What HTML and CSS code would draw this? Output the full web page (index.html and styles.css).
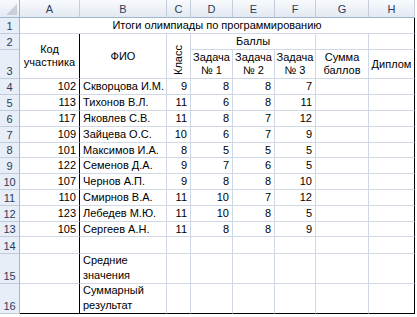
FILE: index.html
```html
<!DOCTYPE html>
<html lang="ru">
<head>
<meta charset="utf-8">
<link rel="stylesheet" href="styles.css">
</head>
<body>
<div class="sheet">
  <div class="corner"><svg width="19" height="17" viewBox="0 0 19 17"><polygon points="17,4 17,15 6,15" fill="#c9d0da"/></svg></div>
  <div class="ch">A</div><div class="ch">B</div><div class="ch">C</div><div class="ch">D</div><div class="ch">E</div><div class="ch">F</div><div class="ch">G</div><div class="ch">H</div>

  <div class="rh">1</div>
  <div class="c title">Итоги олимпиады по программированию</div>

  <div class="rh">2</div>
  <div class="c r23 ctr colA bb">Код<br>участника</div>
  <div class="c r23 ctr">ФИО</div>
  <div class="c r23 rot"><span>Класс</span></div>
  <div class="c span3 ctr">Баллы</div>
  <div class="c"></div>
  <div class="c last"></div>

  <div class="rh">3</div>
  <div class="c ctr">Задача<br>№ 1</div>
  <div class="c ctr">Задача<br>№ 2</div>
  <div class="c ctr">Задача<br>№ 3</div>
  <div class="c ctr">Сумма<br>баллов</div>
  <div class="c ctr last">Диплом</div>

  <div class="rh">4</div><div class="c num colA">102</div><div class="c txt">Скворцова И.М.</div><div class="c num">9</div><div class="c num">8</div><div class="c num">8</div><div class="c num">7</div><div class="c"></div><div class="c last"></div>
  <div class="rh">5</div><div class="c num colA">113</div><div class="c txt">Тихонов В.Л.</div><div class="c num">11</div><div class="c num">6</div><div class="c num">8</div><div class="c num">11</div><div class="c"></div><div class="c last"></div>
  <div class="rh">6</div><div class="c num colA">117</div><div class="c txt">Яковлев С.В.</div><div class="c num">11</div><div class="c num">8</div><div class="c num">7</div><div class="c num">12</div><div class="c"></div><div class="c last"></div>
  <div class="rh">7</div><div class="c num colA">109</div><div class="c txt">Зайцева О.С.</div><div class="c num">10</div><div class="c num">6</div><div class="c num">7</div><div class="c num">9</div><div class="c"></div><div class="c last"></div>
  <div class="rh">8</div><div class="c num colA">101</div><div class="c txt">Максимов И.А.</div><div class="c num">8</div><div class="c num">5</div><div class="c num">5</div><div class="c num">5</div><div class="c"></div><div class="c last"></div>
  <div class="rh">9</div><div class="c num colA">122</div><div class="c txt">Семенов Д.А.</div><div class="c num">9</div><div class="c num">7</div><div class="c num">6</div><div class="c num">5</div><div class="c"></div><div class="c last"></div>
  <div class="rh">10</div><div class="c num colA">107</div><div class="c txt">Чернов А.П.</div><div class="c num">9</div><div class="c num">8</div><div class="c num">8</div><div class="c num">10</div><div class="c"></div><div class="c last"></div>
  <div class="rh">11</div><div class="c num colA">110</div><div class="c txt">Смирнов В.А.</div><div class="c num">11</div><div class="c num">10</div><div class="c num">7</div><div class="c num">12</div><div class="c"></div><div class="c last"></div>
  <div class="rh">12</div><div class="c num colA">123</div><div class="c txt">Лебедев М.Ю.</div><div class="c num">11</div><div class="c num">10</div><div class="c num">8</div><div class="c num">5</div><div class="c"></div><div class="c last"></div>
  <div class="rh">13</div><div class="c num colA">105</div><div class="c txt">Сергеев А.Н.</div><div class="c num">11</div><div class="c num">8</div><div class="c num">8</div><div class="c num">9</div><div class="c"></div><div class="c last"></div>
  <div class="rh">14</div><div class="c colA"></div><div class="c"></div><div class="c"></div><div class="c"></div><div class="c"></div><div class="c"></div><div class="c"></div><div class="c last"></div>
  <div class="rh">15</div><div class="c colA"></div><div class="c wrap">Средние<br>значения</div><div class="c"></div><div class="c"></div><div class="c"></div><div class="c"></div><div class="c"></div><div class="c last"></div>
  <div class="rh">16</div><div class="c colA bb"></div><div class="c wrap bb">Суммарный<br>результат</div><div class="c bb"></div><div class="c bb"></div><div class="c bb"></div><div class="c bb"></div><div class="c bb"></div><div class="c last bb"></div>
</div>
</body>
</html>
```
FILE: styles.css
```css
html, body {
  margin: 0;
  padding: 0;
  background: #fff;
}
body {
  font-family: "Liberation Sans", Arial, sans-serif;
  font-size: 11px;
  color: #000;
}
.sheet {
  display: grid;
  grid-template-columns: 20px 60px 87px 24px 42px 42px 41px 53px 46px;
  grid-template-rows: 18px 16px 16px 29px 16px 16px 16px 16px 15px 16px 16px 16px 16px 15px 17px 30px 30px;
  width: 415px;
}
.corner {
  background: linear-gradient(#f7f9fc, #e4eaf3);
  border-right: 1px solid #9eb6ce;
  border-bottom: 1px solid #9eb6ce;
  box-sizing: border-box;
  display: flex;
  align-items: flex-end;
  justify-content: flex-end;
}
.corner svg { display: block; }
.ch {
  background: linear-gradient(#f8fafd, #e3e9f2);
  border-right: 1px solid #c3cdda;
  border-bottom: 1px solid #9eb6ce;
  box-sizing: border-box;
  display: flex;
  align-items: center;
  justify-content: center;
  color: #2b3c5a;
  font-size: 11px;
}
.rh {
  background: #e8eef7;
  border-right: 1px solid #9eb6ce;
  border-bottom: 1px solid #c3cdda;
  box-sizing: border-box;
  display: flex;
  align-items: flex-end;
  justify-content: center;
  padding-bottom: 1px;
  color: #2b3c5a;
  font-size: 11px;
}
.c {
  border-right: 1px solid #d0d7e5;
  border-bottom: 1px solid #d0d7e5;
  box-sizing: border-box;
  display: flex;
  align-items: center;
  white-space: nowrap;
  line-height: 13px;
}
.title {
  grid-column: span 8;
  justify-content: center;
  border-right: 1px solid #000;
}
.r23 { grid-row: span 2; }
.span3 { grid-column: span 3; }
.ctr {
  justify-content: center;
  text-align: center;
}
.num {
  justify-content: flex-end;
  padding-right: 3px;
}
.txt {
  padding-left: 3px;
}
.wrap {
  padding-left: 3px;
  align-items: flex-end;
  line-height: 15px;
  padding-bottom: 0;
}
.rot {
  justify-content: center;
  align-items: flex-end;
  padding-bottom: 3px;
}
.rot span {
  writing-mode: vertical-rl;
  transform: rotate(180deg);
  line-height: 13px;
}
.colA { border-right-color: #000; }
.last { border-right-color: #000; }
.bb { border-bottom-color: #d0d7e5; }
.sheet > .bb:nth-last-child(-n+8) { border-bottom-color: #000; }
.c.colA.bb:not(.r23) { border-bottom-color: #000; }
.r23.colA { border-bottom-color: #d0d7e5; }
```
